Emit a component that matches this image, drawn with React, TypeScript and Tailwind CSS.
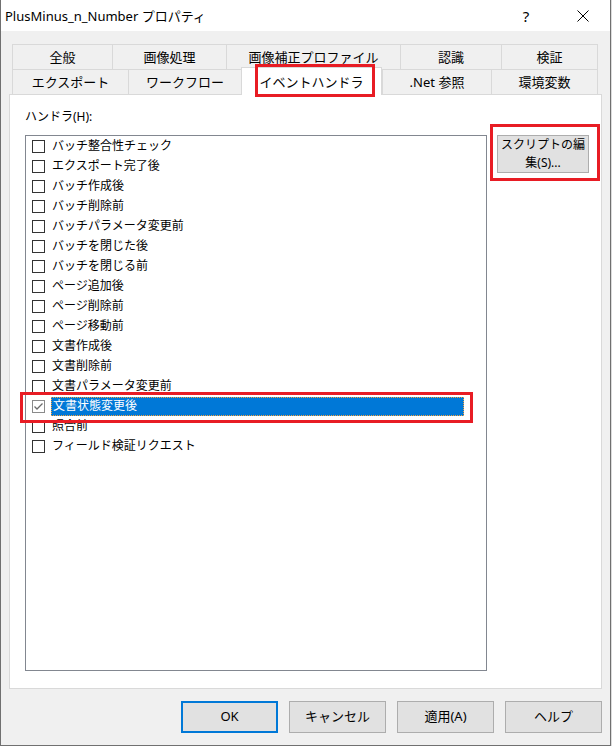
import React from 'react';

// タブの定義（上段・下段）
const topTabs = [
  { label: '全般', w: 'w-[100px]' },
  { label: '画像処理', w: 'w-[114px]' },
  { label: '画像補正プロファイル', w: 'w-[174px]' },
  { label: '認識', w: 'w-[101px]' },
  { label: '検証', w: 'w-[97px]' },
];

const bottomTabs = [
  { label: 'エクスポート', w: 'w-[116px]' },
  { label: 'ワークフロー', w: 'w-[113px]' },
  { label: 'イベントハンドラ', w: 'w-[141px]', active: true },
  { label: '.Net 参照', w: 'w-[109px]' },
  { label: '環境変数', w: 'w-[107px]' },
];

// イベントハンドラ一覧
const handlers = [
  'バッチ整合性チェック',
  'エクスポート完了後',
  'バッチ作成後',
  'バッチ削除前',
  'バッチパラメータ変更前',
  'バッチを閉じた後',
  'バッチを閉じる前',
  'ページ追加後',
  'ページ削除前',
  'ページ移動前',
  '文書作成後',
  '文書削除前',
  '文書パラメータ変更前',
  '文書状態変更後',
  '照合前',
  'フィールド検証リクエスト',
];

const SELECTED = 13;

function CheckBox({ checked }: { checked: boolean }) {
  return (
    <div
      className={
        checked
          ? 'w-[13px] h-[13px] border border-[#8a8a8a] bg-white flex items-center justify-center shrink-0'
          : 'w-[13px] h-[13px] border border-[#333333] bg-white shrink-0'
      }
    >
      {checked && (
        <svg width="11" height="11" viewBox="0 0 11 11">
          <polyline points="1.5,5.5 4,8 9.5,2.5" fill="none" stroke="#6b6b6b" strokeWidth="1.3" />
        </svg>
      )}
    </div>
  );
}

function DialogButton({ label, primary }: { label: string; primary?: boolean }) {
  return (
    <button
      className={
        primary
          ? 'w-[97px] h-[32px] bg-[#e1e1e1] border-2 border-[#0078d7] text-[13px] text-black'
          : 'w-[97px] h-[32px] bg-[#e1e1e1] border border-[#adadad] text-[13px] text-black'
      }
    >
      {label}
    </button>
  );
}

export default function App() {
  return (
    <div className="w-[612px] h-[746px] bg-[#dcdcdc] font-['Noto_Sans','Noto_Sans_CJK_JP',sans-serif] text-black">
      <div className="relative w-[611px] h-[746px] border-l border-r border-b border-[#707070] bg-[#f0f0f0] flex flex-col">
        {/* タイトルバー */}
        <div className="h-[31px] bg-white flex items-center pl-[4px] shrink-0">
          <span className="text-[13px] leading-[16px] flex-1">PlusMinus_n_Number プロパティ</span>
          <span className="text-[15px] leading-[16px] w-[46px] text-center mr-[11px]">?</span>
          <div className="w-[46px] h-[31px] flex items-center justify-center mr-[4px]">
            <svg width="12" height="12" viewBox="0 0 12 12">
              <path d="M0.5 0.5 L11.5 11.5 M11.5 0.5 L0.5 11.5" stroke="#000" strokeWidth="1" />
            </svg>
          </div>
        </div>

        {/* タブ */}
        <div className="pt-[13px] pl-[11px]">
          <div className="flex h-[25px]">
            {topTabs.map((t, i) => (
              <div
                key={t.label}
                className={`${t.w} h-full border-t border-l border-[#d9d9d9] flex items-center justify-center text-[13px] leading-[16px] ${
                  i === topTabs.length - 1 ? 'border-r' : ''
                }`}
              >
                {t.label}
              </div>
            ))}
          </div>
          <div className="flex h-[25px]">
            {bottomTabs.map((t, i) =>
              t.active ? (
                <div
                  key={t.label}
                  className={`${t.w} h-[28px] -mt-[2px] relative z-10 bg-white border-t border-l border-r border-[#d9d9d9] flex items-center justify-center text-[13px] leading-[16px]`}
                >
                  {t.label}
                </div>
              ) : (
                <div
                  key={t.label}
                  className={`${t.w} h-full border-t border-l border-[#d9d9d9] flex items-center justify-center text-[13px] leading-[16px] ${
                    i === bottomTabs.length - 1 ? 'border-r' : ''
                  }`}
                >
                  {t.label}
                </div>
              )
            )}
          </div>
        </div>

        {/* パネル */}
        <div className="ml-[8px] w-[593px] h-[595px] bg-white border border-[#d9d9d9] pt-[14px] pl-[15px]">
          <div className="text-[12px] leading-[16px] mb-[10px]">ハンドラ(H):</div>
          <div className="flex items-start gap-[10px]">
            <div className="w-[462px] h-[536px] border border-[#828790] bg-white">
              {handlers.map((h, i) => (
                <div key={h} className="h-[20px] flex items-center pl-[6px]">
                  <CheckBox checked={i === SELECTED} />
                  {i === SELECTED ? (
                    <div className="ml-[6px] w-[413px] h-[19px] bg-[#0078d7] border border-dotted border-[#f7a33c] flex items-center pl-[1px] text-white text-[12px] leading-[16px]">
                      {h}
                    </div>
                  ) : (
                    <span className="ml-[7px] text-[12px] leading-[16px]">{h}</span>
                  )}
                </div>
              ))}
            </div>
            <button className="w-[92px] h-[38px] bg-[#e1e1e1] border border-[#adadad] text-[12px] leading-[18px] text-black">
              スクリプトの編
              <br />
              集(S)...
            </button>
          </div>
        </div>

        {/* ボタン */}
        <div className="flex justify-end gap-[11px] pr-[8px] mt-[12px]">
          <DialogButton label="OK" primary />
          <DialogButton label="キャンセル" />
          <DialogButton label="適用(A)" />
          <DialogButton label="ヘルプ" />
        </div>

        {/* 注釈の赤枠 */}
        <div className="absolute left-[254px] top-[64px] w-[120px] h-[33px] border-[3px] border-[#e81c24] z-20" />
        <div className="absolute left-[489px] top-[124px] w-[110px] h-[57px] border-[3px] border-[#e81c24] z-20" />
        <div className="absolute left-[19px] top-[392px] w-[453px] h-[31px] border-[3px] border-[#e81c24] z-20" />
      </div>
    </div>
  );
}
